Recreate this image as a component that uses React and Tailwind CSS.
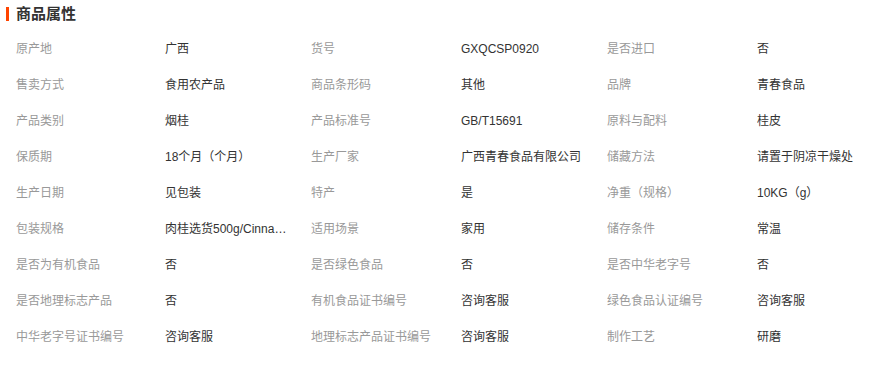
const ROWS = [
  ['原产地', '广西', '货号', 'GXQCSP0920', '是否进口', '否'],
  ['售卖方式', '食用农产品', '商品条形码', '其他', '品牌', '青春食品'],
  ['产品类别', '烟桂', '产品标准号', 'GB/T15691', '原料与配料', '桂皮'],
  ['保质期', '18个月（个月）', '生产厂家', '广西青春食品有限公司', '储藏方法', '请置于阴凉干燥处'],
  ['生产日期', '见包装', '特产', '是', '净重（规格）', '10KG（g）'],
  ['包装规格', '肉桂选货500g/Cinnamon sticks', '适用场景', '家用', '储存条件', '常温'],
  ['是否为有机食品', '否', '是否绿色食品', '否', '是否中华老字号', '否'],
  ['是否地理标志产品', '否', '有机食品证书编号', '咨询客服', '绿色食品认证编号', '咨询客服'],
  ['中华老字号证书编号', '咨询客服', '地理标志产品证书编号', '咨询客服', '制作工艺', '研磨'],
];

function Row({ cells }) {
  return (
    <div className="grid grid-cols-[149px_146px_150px_146px_150px_1fr] h-[36px] items-center">
      {cells.map((c, i) => (
        <div
          key={i}
          className={
            i % 2 === 0
              ? 'text-[#999] truncate pr-2'
              : 'text-[#333] pr-2'
          }
        >
          {i % 2 === 1 ? <span className="block truncate max-w-[122px]">{c}</span> : c}
        </div>
      ))}
    </div>
  );
}

export default function App() {
  return (
    <div
      className="w-[895px] h-[368px] bg-white text-[12px] leading-[16px]"
      style={{ fontFamily: '"Liberation Sans", "Noto Sans CJK SC", sans-serif' }}
    >
      <div className="flex items-center h-[28px] pl-[6px]">
        <span className="w-[3px] h-[14px] bg-[#ff4400]" />
        <h3 className="ml-[7px] text-[15px] font-bold text-[#333]">商品属性</h3>
      </div>
      <div className="pl-[16px] mt-[3px]">
        {ROWS.map((r, i) => (
          <Row key={i} cells={r} />
        ))}
      </div>
    </div>
  );
}
